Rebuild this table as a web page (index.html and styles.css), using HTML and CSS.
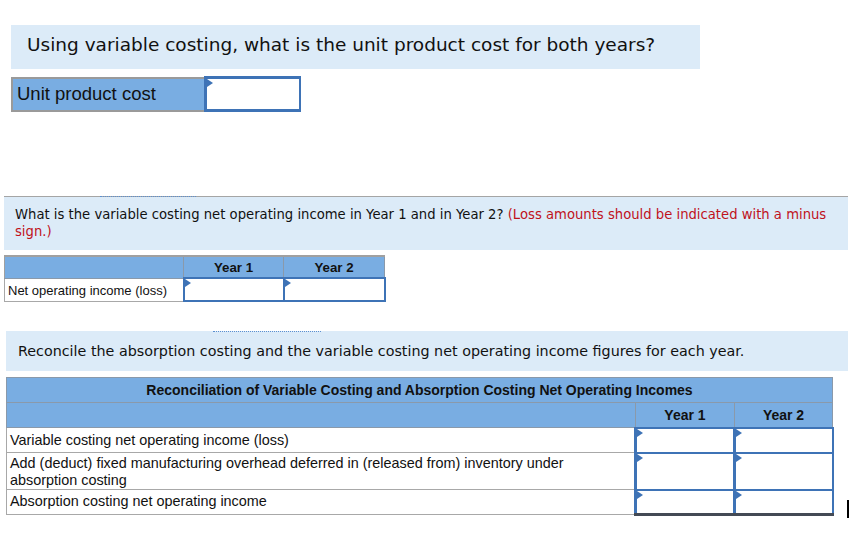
FILE: index.html
```html
<!DOCTYPE html>
<html>
<head>
<meta charset="utf-8">
<link rel="stylesheet" href="styles.css">
</head>
<body>
<div class="page">
  <div class="q q1">Using variable costing, what is the unit product cost for both years?</div>
  <table class="t t1">
    <tr>
      <td class="lbl">Unit product cost</td>
      <td class="inp"><span class="tri"></span></td>
    </tr>
  </table>

  <div class="q q2">
    <span class="dots d2"></span>
    What is the variable costing net operating income in Year 1 and in Year 2? <span class="red">(Loss amounts should be indicated with a minus sign.)</span>
  </div>
  <table class="t t2">
    <colgroup>
      <col class="c0"><col class="c1"><col class="c2">
    </colgroup>
    <tr class="hd">
      <th class="h0"></th>
      <th>Year 1</th>
      <th>Year 2</th>
    </tr>
    <tr>
      <td class="rl">Net operating income (loss)</td>
      <td class="inp"><span class="tri"></span></td>
      <td class="inp"><span class="tri"></span></td>
    </tr>
  </table>

  <div class="q q3">
    <span class="dots d3"></span>
    Reconcile the absorption costing and the variable costing net operating income figures for each year.
  </div>
  <table class="t t3">
    <colgroup>
      <col class="c0"><col class="c1"><col class="c2">
    </colgroup>
    <tr class="hd title">
      <th colspan="3">Reconciliation of Variable Costing and Absorption Costing Net Operating Incomes</th>
    </tr>
    <tr class="hd">
      <th></th>
      <th>Year 1</th>
      <th>Year 2</th>
    </tr>
    <tr class="r1">
      <td class="rl">Variable costing net operating income (loss)</td>
      <td class="inp"><span class="tri"></span></td>
      <td class="inp"><span class="tri"></span></td>
    </tr>
    <tr class="r2">
      <td class="rl">Add (deduct) fixed manufacturing overhead deferred in (released from) inventory under absorption costing</td>
      <td class="inp"><span class="tri"></span></td>
      <td class="inp"><span class="tri"></span></td>
    </tr>
    <tr class="r3">
      <td class="rl">Absorption costing net operating income</td>
      <td class="inp last"><span class="tri"></span></td>
      <td class="inp last"><span class="tri"></span></td>
    </tr>
  </table>
  <span class="caret"></span>
</div>
</body>
</html>
```

FILE: styles.css
```css
html, body {
  margin: 0;
  padding: 0;
  background: #ffffff;
}
.page {
  position: relative;
  width: 850px;
  height: 546px;
  overflow: hidden;
}
.q {
  background: #dcebf8;
  font-family: "DejaVu Sans", Verdana, sans-serif;
  color: #111;
  box-sizing: border-box;
  position: relative;
}
.q1 {
  margin: 25px 0 0 11px;
  width: 689px;
  height: 44px;
  padding: 9px 0 0 16px;
  font-size: 18.5px;
}
.q2 {
  margin: 84px 0 0 4px;
  width: 844px;
  height: 54px;
  border-top: 1px solid #a5a5a5;
  padding: 9px 10px 0 11px;
  font-size: 13.2px;
  line-height: 17px;
}
.q3 {
  margin: 29px 0 0 6px;
  width: 842px;
  height: 40px;
  padding: 12px 0 0 12px;
  font-size: 14.3px;
}
.red { color: #c0121c; }
.dots {
  position: absolute;
  top: -1px;
  height: 0;
  border-top: 1px dotted #5b8fd0;
}
.d2 { left: 96px; width: 96px; }
.d3 { left: 207px; width: 108px; top: 0; }

.t {
  border-collapse: collapse;
  font-family: "Liberation Sans", Arial, sans-serif;
  color: #111;
  table-layout: fixed;
}
.t td, .t th {
  padding: 0;
  box-sizing: border-box;
}
.t1 {
  margin: 7px 0 0 11px;
}
.t1 .lbl {
  width: 193px;
  height: 33px;
  background: #79ade2;
  border: 2px solid #9a9a9a;
  border-right: 1px solid #8a8a8a;
  font-size: 18.5px;
  padding: 0 0 0 4px;
}
.inp {
  position: relative;
  background: #fff;
  border: 2px solid #3e73b6;
}
.t1 .inp {
  width: 95px;
  border-width: 3px 2px 3px 3px;
}
.tri {
  position: absolute;
  left: 0;
  top: 0;
  width: 0;
  height: 0;
  border-top: 4px solid transparent;
  border-bottom: 4px solid transparent;
  border-left: 6px solid #3e73b6;
}

.t2 {
  margin: 5px 0 0 4px;
  width: 380px;
}
.t2 .c0 { width: 179px; }
.t2 .c1 { width: 100px; }
.t2 .c2 { width: 101px; }
.hd th {
  background: #79ade2;
  border: 1px solid #8a99aa;
  font-weight: bold;
  font-size: 13.3px;
  text-align: center;
}
.t2 .hd th {
  height: 22px;
  border-top: 2px solid #a0a0a0;
}
.t2 .hd .h0 { border-left: 1px solid #a0a0a0; }
.t2 .rl {
  height: 23px;
  font-size: 13px;
  padding: 1px 0 0 3px;
  border: 1px solid #a8a8a8;
  border-right: none;
}

.t3 {
  margin: 6px 0 0 6px;
  width: 826px;
}
.t3 .c0 { width: 629px; }
.t3 .c1 { width: 99px; }
.t3 .c2 { width: 98px; }
.t3 .title th {
  height: 26px;
  font-size: 14.7px;
  border: 1px solid #8a99aa;
}
.t3 .hd th {
  height: 25px;
  font-size: 14px;
}
.t3 .rl {
  font-size: 14.4px;
  line-height: 17px;
  padding: 4px 8px 0 3px;
  vertical-align: top;
  border: 1px solid #a8a8a8;
  border-right: none;
}
.t3 .r1 td { height: 25px; }
.t3 .r2 td { height: 36px; padding-top: 2px; }
.t3 .r3 td { height: 25px; padding-top: 3px; }
.t3 .inp { border-width: 2px 2px 2px 3px; }
.t3 .inp.last { border-bottom: 3px solid #444a55; }

.caret {
  position: absolute;
  left: 847px;
  top: 500px;
  width: 2px;
  height: 18px;
  background: #000;
}
```
